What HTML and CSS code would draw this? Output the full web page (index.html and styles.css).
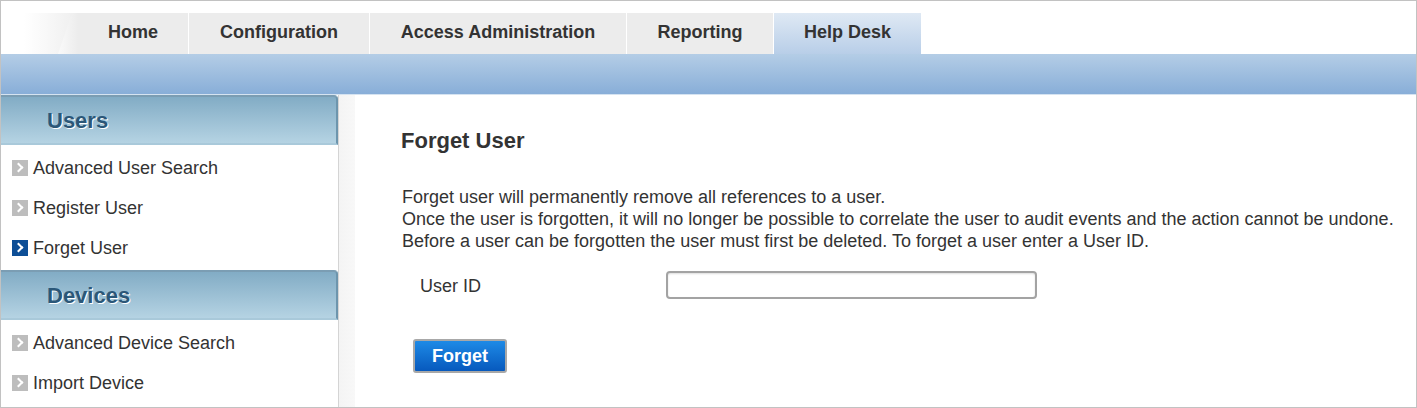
FILE: index.html
```html
<!DOCTYPE html>
<html lang="en">
<head>
    <meta charset="UTF-8">
    <title>Forget User</title>
    <link rel="stylesheet" href="styles.css">
</head>
<body>
<div class="frame">

    <!-- Top navigation -->
    <div class="topbar">
        <div class="logo-fade"></div>
        <ul class="tabs">
            <li>Home</li>
            <li>Configuration</li>
            <li>Access Administration</li>
            <li>Reporting</li>
            <li class="active">Help Desk</li>
        </ul>
    </div>
    <div class="band"></div>

    <div class="page">
        <!-- Left menu -->
        <div class="sidebar">
            <div class="menu-head">Users</div>
            <ul class="menu">
                <li><span class="arrow"></span>Advanced User Search</li>
                <li><span class="arrow"></span>Register User</li>
                <li class="current"><span class="arrow"></span>Forget User</li>
            </ul>
            <div class="menu-head">Devices</div>
            <ul class="menu">
                <li><span class="arrow"></span>Advanced Device Search</li>
                <li><span class="arrow"></span>Import Device</li>
            </ul>
        </div>
        <div class="gutter"></div>

        <!-- Main content -->
        <div class="content">
            <h1>Forget User</h1>
            <p class="intro">
                Forget user will permanently remove all references to a user.<br>
                Once the user is forgotten, it will no longer be possible to correlate the user to audit events and the action cannot be undone.<br>
                Before a user can be forgotten the user must first be deleted. To forget a user enter a User ID.
            </p>
            <div class="field">
                <label for="userid">User ID</label>
                <input type="text" id="userid">
            </div>
            <button class="btn">Forget</button>
        </div>
    </div>

</div>
</body>
</html>
```

FILE: styles.css
```css
/* Page basics */
body {
    margin: 0;
    font-family: "Liberation Sans", Arial, sans-serif;
    color: #333;
}

.frame {
    width: 1417px;
    height: 408px;
    box-sizing: border-box;
    border: 1px solid #c2c2c2;
    overflow: hidden;
    display: flex;
    flex-direction: column;
}

/* Top tabs */
.topbar {
    display: flex;
    align-items: flex-end;
    height: 53px;
}

.logo-fade {
    width: 77px;
    height: 41px;
    background: linear-gradient(to right, #ffffff 30%, #eeeeee);
    position: relative;
}

.logo-fade::after {
    content: "";
    position: absolute;
    top: 0;
    right: 0;
    width: 20px;
    height: 41px;
    background: linear-gradient(to right, #fafafa, #ececec);
    clip-path: polygon(14px 0, 100% 0, 100% 100%, 0 100%);
}

.tabs {
    display: flex;
    list-style: none;
    margin: 0;
    padding: 0;
}

.tabs li {
    height: 41px;
    line-height: 38px;
    text-align: center;
    margin-left: 1px;
    background-color: #ececec;
    font-weight: bold;
    font-size: 18px;
    color: #333;
}

.tabs li:nth-child(1) { width: 110px; margin-left: 0; }
.tabs li:nth-child(2) { width: 180px; }
.tabs li:nth-child(3) { width: 256px; }
.tabs li:nth-child(4) { width: 146px; }
.tabs li:nth-child(5) { width: 147px; }

.tabs li.active {
    background: linear-gradient(to bottom, #dfe9f4, #b8cee8);
}

.band {
    height: 40px;
    background: linear-gradient(to bottom, #b4cde6, #88aed8);
    border-bottom: 1px solid #d5e3f1;
}

/* Body area */
.page {
    flex: 1;
    display: flex;
}

.sidebar {
    width: 337px;
    border-right: 1px solid #d4d4d4;
}

.menu-head {
    height: 46px;
    line-height: 48px;
    padding-left: 46px;
    border-top: 2px solid #7b9db3;
    border-right: 2px solid #6d95ad;
    border-bottom: 2px solid #a9c9da;
    border-top-right-radius: 4px;
    background: linear-gradient(to bottom, #82acc5, #b5d3e3);
    font-size: 22px;
    font-weight: bold;
    color: #2b5778;
    text-shadow: 1px 1px 0 #ffffff;
}

.menu {
    list-style: none;
    margin: 0;
    padding: 3px 0 2px 0;
}

.menu li {
    display: flex;
    align-items: center;
    height: 40px;
    padding-left: 11px;
    font-size: 18px;
    color: #333;
}

.arrow {
    width: 16px;
    height: 16px;
    margin-right: 5px;
    background-color: #bdbdbd;
    position: relative;
}

.arrow::after {
    content: "";
    position: absolute;
    left: 3px;
    top: 4px;
    width: 5px;
    height: 5px;
    border-top: 2px solid #ffffff;
    border-right: 2px solid #ffffff;
    transform: rotate(45deg);
}

.current .arrow {
    background-color: #0d4e96;
}

.gutter {
    width: 16px;
    background: linear-gradient(to right, #f4f4f4, #f8f8f8);
}

/* Main content */
.content {
    flex: 1;
    padding-left: 46px;
}

h1 {
    font-size: 22px;
    margin: 33px 0 0 0;
    color: #333;
}

.intro {
    margin: 32px 0 0 1px;
    font-size: 18px;
    line-height: 22px;
    color: #333;
}

.field {
    display: flex;
    align-items: center;
    margin-top: 19px;
    padding-left: 19px;
}

.field label {
    width: 246px;
    font-size: 18px;
    padding-top: 2px;
}

.field input {
    width: 371px;
    height: 28px;
    box-sizing: border-box;
    border: 2px solid #a3a3a3;
    border-radius: 4px;
    box-shadow: inset 0 1px 2px #dddddd;
}

.btn {
    margin: 40px 0 0 12px;
    width: 94px;
    height: 34px;
    border: 2px solid #a8a8a8;
    border-radius: 3px;
    background: linear-gradient(to bottom, #1e8ae6, #0759bd);
    color: #ffffff;
    font-family: "Liberation Sans", Arial, sans-serif;
    font-size: 18px;
    font-weight: bold;
}
```
